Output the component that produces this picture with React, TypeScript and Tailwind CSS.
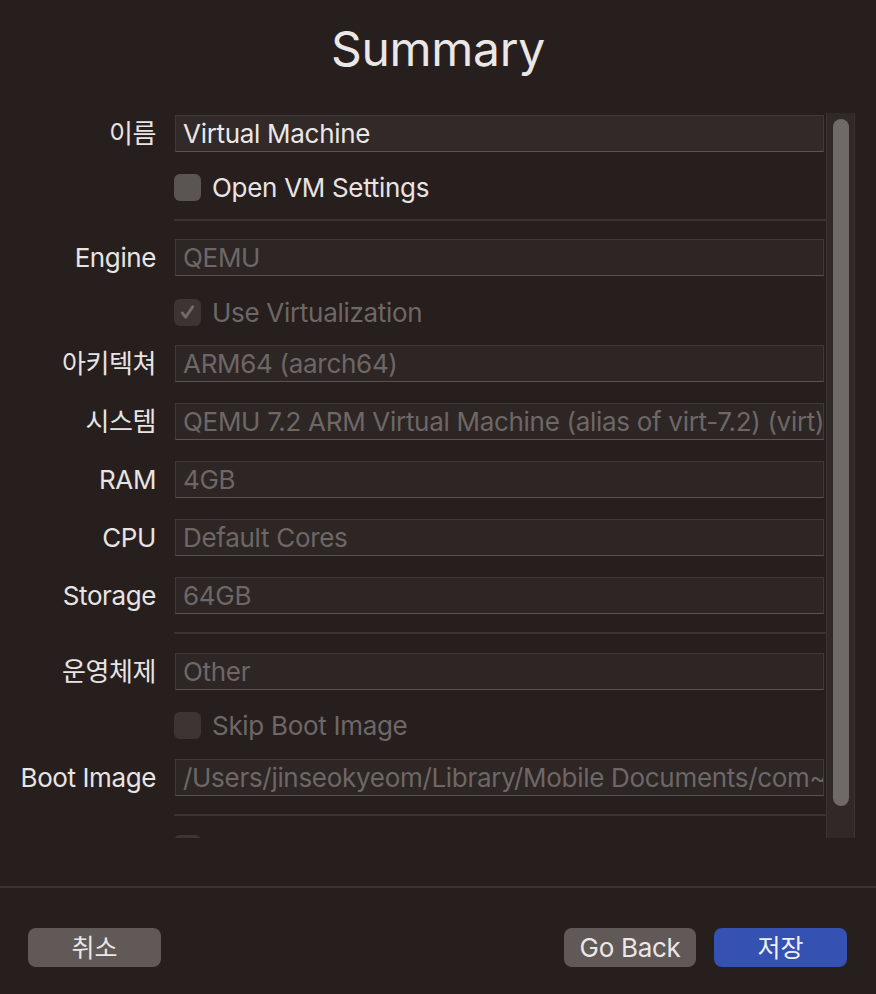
import React from 'react';

const FONT = { fontFamily: 'Inter, "Noto Sans CJK KR", "Noto Sans", sans-serif' };

type FieldRowProps = { label: string; value: string; active?: boolean; mt: string };

const FieldRow: React.FC<FieldRowProps> = ({ label, value, active, mt }) => (
  <div className={`flex items-center h-[37px] ${mt}`}>
    <div className="w-[156px] shrink-0 text-right text-[26px] leading-[30px] text-[#e8e4e3] tracking-[-0.4px]">{label}</div>
    <div
      className={`ml-[19px] mr-[2px] h-[37px] flex-1 overflow-hidden border border-[#3f3837] border-b-[#5a5352] flex items-center pl-[7px] whitespace-nowrap text-[26px] leading-[30px] tracking-[-0.3px] ${
        active ? 'bg-[#322a29] text-[#ebe7e6]' : 'bg-[#2d2625] text-[#6e6766]'
      }`}
    >
      {value}
    </div>
  </div>
);

type CheckRowProps = { label: string; checked?: boolean; disabled?: boolean; mt: string };

const CheckRow: React.FC<CheckRowProps> = ({ label, checked, disabled, mt }) => (
  <div className={`flex items-center h-[27px] ml-[174px] ${mt}`}>
    <div
      className={`w-[27px] h-[27px] shrink-0 rounded-[6px] flex items-center justify-center ${
        disabled ? 'bg-[#3c3534]' : 'bg-[#5a5453]'
      }`}
    >
      {checked && (
        <svg width="19" height="19" viewBox="0 0 20 20" fill="none">
          <path d="M4.5 10.5 L8 15 L15.5 4" stroke="#726b6a" strokeWidth="3" strokeLinecap="round" strokeLinejoin="round" />
        </svg>
      )}
    </div>
    <span className={`ml-[11px] text-[26px] leading-[27px] tracking-[-0.3px] ${disabled ? 'text-[#6e6766]' : 'text-[#e8e4e3]'}`}>{label}</span>
  </div>
);

const Separator: React.FC<{ mt: string }> = ({ mt }) => (
  <div className={`ml-[174px] h-[2px] bg-[#3b3433] ${mt}`} />
);

export default function App() {
  return (
    <div className="w-full h-[994px] bg-[#271f1e] flex flex-col overflow-hidden" style={FONT}>
      <div className="h-[113px] flex justify-center pt-[20px]">
        <h1 className="text-[48px] leading-[58px] text-[#ebe7e6] font-normal tracking-[-0.3px]">Summary</h1>
      </div>

      <div className="h-[725px] flex">
        <div className="flex-1 overflow-hidden">
          <FieldRow label="이름" value="Virtual Machine" active mt="mt-[2px]" />
          <CheckRow label="Open VM Settings" mt="mt-[22px]" />
          <Separator mt="mt-[18px]" />
          <FieldRow label="Engine" value="QEMU" mt="mt-[18px]" />
          <CheckRow label="Use Virtualization" checked disabled mt="mt-[23px]" />
          <FieldRow label="아키텍쳐" value="ARM64 (aarch64)" mt="mt-[19px]" />
          <FieldRow label="시스템" value="QEMU 7.2 ARM Virtual Machine (alias of virt-7.2) (virt)" mt="mt-[21px]" />
          <FieldRow label="RAM" value="4GB" mt="mt-[21px]" />
          <FieldRow label="CPU" value="Default Cores" mt="mt-[21px]" />
          <FieldRow label="Storage" value="64GB" mt="mt-[21px]" />
          <Separator mt="mt-[18px]" />
          <FieldRow label="운영체제" value="Other" mt="mt-[19px]" />
          <CheckRow label="Skip Boot Image" disabled mt="mt-[22px]" />
          <FieldRow label="Boot Image" value="/Users/jinseokyeom/Library/Mobile Documents/com~apple~CloudDocs/ISO" mt="mt-[20px]" />
          <Separator mt="mt-[18px]" />
          <CheckRow label="" disabled mt="mt-[19px]" />
        </div>
        <div className="w-[29px] mr-[21px] bg-[#302928] border-x border-[#3b3433] flex justify-center pt-[6px] pb-[32px]">
          <div className="w-[16px] h-full rounded-full bg-[#6f6968]" />
        </div>
      </div>

      <div className="mt-[48px] h-[2px] bg-[#3a3332]" />

      <div className="flex items-center px-[28px] pr-[29px] mt-[40px]">
        <button className="w-[133px] h-[39px] rounded-[8px] bg-[#605957] text-[#ebe7e6] text-[25px] leading-[30px]">취소</button>
        <div className="flex-1" />
        <button className="w-[132px] h-[39px] rounded-[8px] bg-[#605957] text-[#ebe7e6] text-[26px] leading-[30px] tracking-[-0.3px]">Go Back</button>
        <button className="ml-[18px] w-[133px] h-[39px] rounded-[8px] bg-[#3551b1] text-[#eef0f8] text-[25px] leading-[30px]">저장</button>
      </div>
    </div>
  );
}
